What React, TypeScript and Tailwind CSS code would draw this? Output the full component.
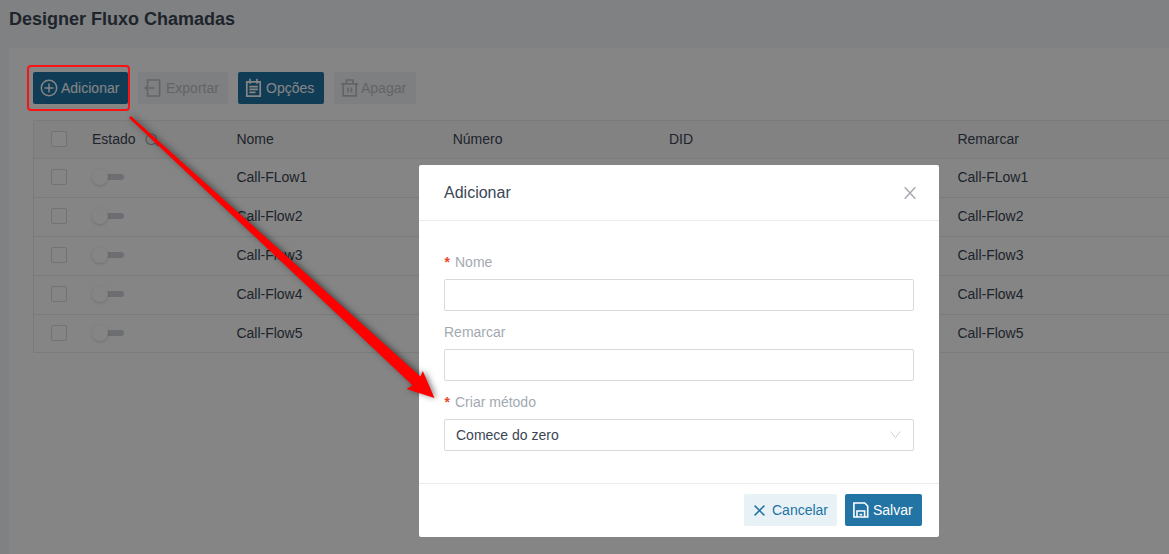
import React from "react"

const columns = ["Nome", "Número", "DID", "Remarcar"]

const flows = [
  { id: 1, name: "Call-FLow1", remark: "Call-FLow1" },
  { id: 2, name: "Call-Flow2", remark: "Call-Flow2" },
  { id: 3, name: "Call-Flow3", remark: "Call-Flow3" },
  { id: 4, name: "Call-Flow4", remark: "Call-Flow4" },
  { id: 5, name: "Call-Flow5", remark: "Call-Flow5" },
]

const rowGrid = "grid grid-cols-[50px_136.4px_216.3px_216.3px_288.4px_1fr] items-center pb-0.5"

const PlusCircleIcon = () => (
  <svg width="18" height="18" viewBox="0 0 18 18" fill="none" stroke="currentColor" strokeWidth="1.5">
    <circle cx="9" cy="9" r="7.7" />
    <path d="M9 4.5v9M4.5 9h9" />
  </svg>
)

const ExportIcon = () => (
  <svg width="18" height="18" viewBox="0 0 18 18" fill="none" stroke="currentColor" strokeWidth="1.7">
    <path d="M3.6 5V1h12v16h-12V13" />
    <path d="M10.5 9H1.3M4.5 5.8L1.3 9l3.2 3.2" />
  </svg>
)

const OptionsIcon = () => (
  <svg width="18" height="20" viewBox="0 0 18 20" fill="none" stroke="currentColor" strokeWidth="1.7">
    <path d="M1.8 3.8h13.4v14.4H1.8zM5 .8v5M12 .8v5M4.3 8.6h8.6M4.3 11.4h8.6M4.3 14.4h6.2" />
  </svg>
)

const TrashIcon = () => (
  <svg width="18" height="18" viewBox="0 0 18 18" fill="none" stroke="currentColor" strokeWidth="1.7">
    <path d="M.2 4.8h17M5.4 4.5V1h6.6v3.5M2.2 5v11.9h13V5M7 8.5v5M10.4 8.5v5" />
  </svg>
)

const SaveIcon = () => (
  <svg width="16" height="16" viewBox="0 0 16 16" fill="none" stroke="currentColor" strokeWidth="1.6">
    <path d="M.9 1h10.8l3 3v11H.9z" />
    <path d="M4 15V9h7.6v6M6.6 12.6h2.6" />
  </svg>
)

const SearchIcon = () => (
  <svg width="14" height="14" viewBox="0 0 14 14" fill="none" stroke="currentColor" strokeWidth="1.2">
    <circle cx="6.3" cy="6.3" r="5.3" />
    <path d="M10 10l3 3" />
  </svg>
)

const Checkbox = () => <div className="ml-[17px] size-4 rounded-xs border border-[#d9dbde] bg-white" />

const Switch = () => (
  <div className="relative flex w-8 items-center">
    <div className="z-10 size-4 shrink-0 rounded-full bg-white shadow-[0_1px_3px_rgba(0,0,0,0.16)]" />
    <div className="-ml-2 h-1.5 w-6 rounded-full bg-[#d0d3d8]" />
  </div>
)

const FieldLabel: React.FC<{ text: string; required?: boolean }> = ({ text, required }) => (
  <div className="flex h-8 items-center pb-[3px] text-[#a3a9b1]">
    {required && (
      <span className="-ml-px mr-1 mt-1 w-2 font-['Liberation_Mono',monospace] text-sm font-bold text-[#e8492f]">*</span>
    )}
    <span>{text}</span>
  </div>
)

const App: React.FC = () => {
  return (
    <div className="relative h-[554px] w-full overflow-hidden bg-[#f4f7f9] font-['Liberation_Sans',Arial,sans-serif] text-sm text-[#3b4654]">
      <h1 className="flex h-12 items-center pb-[10px] pl-[9px] text-lg font-bold">Designer Fluxo Chamadas</h1>

      <div className="isolate ml-[9px] h-[506px] bg-white pl-6 pt-6">
        {/* Toolbar */}
        <div className="flex gap-[10px]">
          <button className="flex h-8 w-[95px] items-center gap-[3px] rounded-xs bg-[#2274a5] pl-[7px] text-white">
            <PlusCircleIcon />
            Adicionar
          </button>
          <button className="flex h-8 w-[90px] items-center gap-[4px] rounded-xs bg-[#f1f4f5] pl-[6px] text-[#bcc0c4]">
            <ExportIcon />
            Exportar
          </button>
          <button className="flex h-8 w-[86px] items-center gap-[3px] rounded-xs bg-[#2274a5] pl-[7px] text-white">
            <OptionsIcon />
            Opções
          </button>
          <button className="flex h-8 w-[82px] items-center gap-[2px] rounded-xs bg-[#f1f4f5] pl-[7px] text-[#bcc0c4]">
            <TrashIcon />
            Apagar
          </button>
        </div>

        {/* Table */}
        <div className="mt-4 rounded-tl-xs rounded-bl-xs border border-r-0 border-[#ebebeb]">
          <div className={`${rowGrid} h-[38px] border-b border-[#ebebeb] bg-[#fafafa]`}>
            <Checkbox />
            <div className="flex items-center gap-[9px] pl-2">
              Estado
              <span className="mt-0.5 text-[#a3a9b1]">
                <SearchIcon />
              </span>
            </div>
            {columns.map((column) => (
              <div key={column} className="pl-4">
                {column}
              </div>
            ))}
          </div>
          {flows.map((flow) => (
            <div key={flow.id} className={`${rowGrid} h-[39px] border-b border-[#ebebeb] last:h-[37px] last:border-b-0`}>
              <Checkbox />
              <div className="pl-2">
                <Switch />
              </div>
              <div className="pl-4">{flow.name}</div>
              <div />
              <div />
              <div className="pl-4">{flow.remark}</div>
            </div>
          ))}
        </div>
      </div>

      {/* Dialog */}
      <div className="absolute inset-0 bg-black/48 pl-[419px] pt-[165px]">
        <div className="flex h-[372px] w-[520px] flex-col rounded-xs bg-white">
          <div className="flex h-14 items-center justify-between border-b border-[#ececec] pl-[25px] pr-[23px] text-base">
            <span>Adicionar</span>
            <svg width="12" height="12" viewBox="0 0 12 12" fill="none" stroke="#a3a9b1" strokeWidth="1.5">
              <path d="M.7.3l10.6 11.4M11.3.3L.7 11.7" />
            </svg>
          </div>

          <div className="flex-1 px-[25px] pt-[26px]">
            <FieldLabel text="Nome" required />
            <div className="mb-[6px] h-8 rounded-xs border border-[#d9d9d9]" />
            <FieldLabel text="Remarcar" />
            <div className="mb-[6px] h-8 rounded-xs border border-[#d9d9d9]" />
            <FieldLabel text="Criar método" required />
            <div className="flex h-8 items-center justify-between rounded-xs border border-[#d9d9d9] pl-[11px] pr-3">
              <span>Comece do zero</span>
              <svg width="11" height="8" viewBox="0 0 11 8" fill="none" stroke="#cfcfcf">
                <path d="M.7.5l4.8 6.3L10.3.5" />
              </svg>
            </div>
          </div>

          <div className="flex h-[54px] items-start justify-end gap-2 border-t border-[#ececec] pr-[17px] pt-[10px]">
            <button className="flex h-8 w-[93px] items-center gap-[7px] rounded-xs bg-[#e8f1f6] pl-[10px] text-[#2274a5]">
              <svg width="11" height="11" viewBox="0 0 11 11" fill="none" stroke="currentColor" strokeWidth="1.5">
                <path d="M.6.6l9.8 9.8M10.4.6L.6 10.4" />
              </svg>
              Cancelar
            </button>
            <button className="flex h-8 w-[77px] items-center gap-1 rounded-xs bg-[#2274a5] pl-2 text-white">
              <SaveIcon />
              Salvar
            </button>
          </div>
        </div>
      </div>

      {/* Callout */}
      <div className="absolute left-[27px] top-[65px] h-[46px] w-[103px] rounded-[4px] border-2 border-[#f81414]" />
      <svg
        className="absolute left-0 top-0 drop-shadow-[2px_0_3px_rgba(0,0,0,0.5)]"
        width="1169"
        height="554"
        viewBox="0 0 1169 554"
      >
        <path d="M130.8 116L420.5 376.6l2.3-5.6 11.7 27-28-9 6-3.8L129 118z" fill="#fe0000" />
      </svg>
    </div>
  )
}

export default App
